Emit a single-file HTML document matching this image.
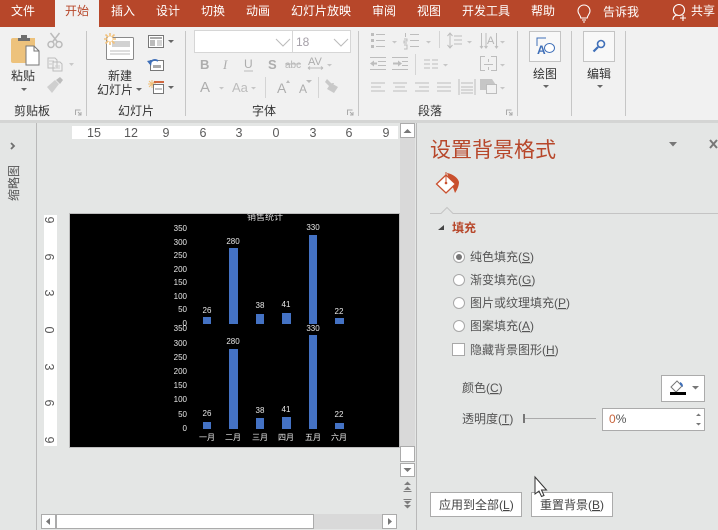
<!DOCTYPE html>
<html lang="zh"><head><meta charset="utf-8"><style>
html,body{margin:0;padding:0;background:#e4e6e5;width:718px;height:530px;overflow:hidden}
svg{display:block;position:absolute;left:0;top:0}
text{font-family:"Liberation Sans","Noto Sans CJK SC",sans-serif;font-size:12px}
.tab text{fill:#fff;text-anchor:middle}
.k text{fill:#333;text-anchor:middle}
.w text{fill:#e8e8e8;font-size:8px;text-anchor:middle}
.ax text{fill:#e8e8e8;font-size:8px;text-anchor:end}
.r text{fill:#5a5a5a;font-size:12.5px;text-anchor:middle}
.p text{fill:#555}
.g{stroke:#bdbdbd;fill:none;stroke-width:1.2}
.a{fill:#b5b5b5}
.d{fill:#666}
</style></head><body>
<svg width="718" height="530" viewBox="0 0 718 530" xmlns="http://www.w3.org/2000/svg">
<rect width="718" height="530" fill="#e4e6e5"/>
<!-- title tabs -->
<rect width="718" height="27" fill="#b7472a"/>
<rect y="27" width="718" height="93" fill="#f1f1f1"/>
<rect x="55" width="44" height="27" fill="#f1f1f1"/>
<rect y="120" width="718" height="3" fill="#d4d5d4"/>
<g class="tab">
<text x="23" y="15">文件</text>
<text x="77" y="15" style="fill:#b7472a">开始</text>
<text x="123" y="15">插入</text>
<text x="168" y="15">设计</text>
<text x="213" y="15">切换</text>
<text x="258" y="15">动画</text>
<text x="321" y="15">幻灯片放映</text>
<text x="384" y="15">审阅</text>
<text x="429" y="15">视图</text>
<text x="486" y="15">开发工具</text>
<text x="543" y="15">帮助</text>
<text x="621" y="16">告诉我</text>
<text x="703" y="15">共享</text>
</g>
<!-- bulb, person -->
<path d="M584 5a6 6 0 0 1 6 6c0 3-2.500 4-2.800 7h-6.400c-.3-3-2.800-4-2.800-7a6 6 0 0 1 6-6zM582 20h4M583 22h2" fill="none" stroke="#fff" stroke-width="1.100"/>
<circle cx="679" cy="10" r="5.500" fill="none" stroke="#fff" stroke-width="1.100"/>
<path d="M673 20c0-4 3-5 5-5M683 15v6M680 18h6" fill="none" stroke="#fff" stroke-width="1.100"/>
<!-- ribbon separators -->
<g fill="#c6c6c6">
<rect x="86" y="31" width="1" height="85"/><rect x="185" y="31" width="1" height="85"/>
<rect x="358" y="31" width="1" height="85"/><rect x="517" y="31" width="1" height="85"/>
<rect x="571" y="31" width="1" height="85"/><rect x="625" y="31" width="1" height="85"/>
</g>
<!-- clipboard -->
<path d="M13 38h22v25H13q-2 0-2-2V40q0-2 2-2z" fill="#edc27c"/>
<path d="M18 41v-3h3v-3h6v3h3v3z" fill="#6e6e6e"/>
<path d="M26 46h8l5 5v14H26z" fill="#fff" stroke="#777"/>
<path d="M34 46v5h5" fill="none" stroke="#777"/>
<!-- scissors -->
<g fill="none" stroke="#bbb" stroke-width="1.500"><circle cx="51" cy="44.500" r="3"/><circle cx="59" cy="44.500" r="3"/><path d="M52.500 42l7-9M57.500 42l-7-9"/></g>
<!-- copy -->
<path d="M48 58h7l2 2v8h-9zM53 62h7l2 2v7h-9z" fill="#f1f1f1" stroke="#bdbdbd"/>
<path d="M49 61h5M49 64h3M55 66h5M55 68h5" stroke="#ccc"/>
<path d="M69 63h5l-2.500 3z" style="fill:#c9c9c9"/>
<!-- brush -->
<path d="M47 87l8-7 4 4-7 9z" fill="#cfcfcf"/><path d="M56 80l4-3 3 3-3 4z" fill="#bdbdbd"/>
<!-- new slide -->
<rect x="106.500" y="37.500" width="27" height="22" rx="1" fill="#fff" stroke="#8a8a8a"/>
<rect x="112" y="41" width="18" height="6" fill="#d2d2d2"/>
<path d="M110 51h20M110 54h20" stroke="#bdbdbd"/>
<path d="M110 33v12M104 39h12M105.500 34.500l9 9M114.500 34.500l-9 9" stroke="#f2c27c" stroke-width="1.600"/>
<circle cx="110" cy="39" r="2.500" fill="#fff"/>
<!-- layout -->
<rect x="148.500" y="35.500" width="15" height="12" fill="#fff" stroke="#777"/>
<rect x="150" y="37" width="12" height="2" fill="#aaa"/><rect x="150" y="40" width="5" height="6" fill="#bbb"/>
<path d="M157 41h5M157 43h5M157 45h5" stroke="#aaa"/>
<!-- reset -->
<rect x="150.500" y="60.500" width="13" height="10" fill="#fff" stroke="#777"/>
<rect x="153" y="65" width="8" height="3" fill="#aaa"/>
<path d="M150 64a5 5 0 0 1 8-3" fill="none" stroke="#3f6fb8" stroke-width="1.800"/><path d="M147 61l5-1-1 6z" fill="#3f6fb8"/>
<!-- section -->
<path d="M152 80v8M148 84h8M149 81l6 6M155 81l-6 6" stroke="#f0bf78"/>
<rect x="154" y="81" width="10" height="2" fill="#d0683f"/>
<rect x="153.500" y="84.500" width="10" height="9" fill="#fff" stroke="#777"/>
<path d="M155 89h7" stroke="#888"/>
<g class="d">
<path d="M168 40h6l-3 3z"/><path d="M168 86h6l-3 3z"/>
<path d="M136 88h6l-3 3z"/><path d="M21 88h6l-3 3z"/>
<path d="M543 85h6l-3 3z"/><path d="M597 85h6l-3 3z"/>
</g>
<g class="k">
<text x="23" y="80">粘贴</text>
<text x="120" y="80">新建</text>
<text x="115" y="94">幻灯片</text>
<text x="32" y="115">剪贴板</text>
<text x="136" y="115">幻灯片</text>
<text x="264" y="115">字体</text>
<text x="430" y="115">段落</text>
<text x="545" y="78">绘图</text>
<text x="599" y="78">编辑</text>
</g>
<!-- dialog launchers -->
<g fill="none" stroke="#aaa"><path d="M75.500 115v-5h5M78 112l3 3M81 112v3h-3"/><path d="M347.500 115v-5h5M350 112l3 3M353 112v3h-3"/><path d="M506.500 115v-5h5M509 112l3 3M512 112v3h-3"/></g>
<!-- font boxes -->
<rect x="194.500" y="30.500" width="98" height="22" fill="#fff" stroke="#d6d6d6"/>
<rect x="292.500" y="30.500" width="58" height="22" fill="#fff" stroke="#d6d6d6"/>
<path d="M276 39l7 7 7-7M334 39l7 7 7-7" fill="none" stroke="#bbb"/>
<text x="296" y="46" style="font-size:12px;fill:#a5a0a8">18</text>
<text x="200" y="69" style="font-weight:bold;font-size:13px;fill:#adadad">B</text>
<text x="223" y="69" style="font-style:italic;font-size:13px;fill:#adadad;font-family:'Liberation Serif',serif">I</text>
<text x="244" y="68" style="font-size:12px;fill:#adadad">U</text>
<text x="268" y="69" style="font-weight:bold;font-size:13px;fill:#adadad">S</text>
<text x="285" y="68" style="font-size:10px;fill:#b5b5b5">abc</text>
<text x="308" y="65" style="font-size:11px;fill:#adadad">AV</text>
<text x="200" y="92" style="font-size:15px;fill:#adadad">A</text>
<text x="232" y="92" style="font-size:13px;fill:#bcbcbc">Aa</text>
<text x="277" y="93" style="font-size:14px;fill:#adadad">A</text>
<text x="299" y="93" style="font-size:12px;fill:#adadad">A</text>
<path d="M244 71h9M285 64h16M308 68h15M308 68l2-1.500M308 68l2 1.500M323 68l-2-1.500M323 68l-2 1.500" stroke="#bbb" fill="none"/>
<path d="M286 83l2-3 2 3zM306 80h6l-3 3z" fill="#bbb"/>
<path d="M329 84l5-1-4 7z" fill="#bbb"/>
<path d="M327 79l4 4-2 3-4-4zM331 83l7 4-4 6-7-4z" fill="#c9c9c9"/>
<rect x="265" y="77" width="1" height="21" fill="#d4d4d4"/><rect x="318" y="77" width="1" height="21" fill="#d4d4d4"/>
<g style="fill:#c6c6c6">
<path d="M327 64h5l-2.500 2.500z"/><path d="M219 87h5l-2.500 2.500z"/><path d="M251 87h5l-2.500 2.500z"/>
<path d="M392 41h5l-2.500 2.500z"/><path d="M426 41h5l-2.500 2.500z"/><path d="M467 41h5l-2.500 2.500z"/><path d="M500 41h5l-2.500 2.500z"/>
<path d="M443 64h5l-2.500 2.500z"/><path d="M500 64h5l-2.500 2.500z"/><path d="M500 87h5l-2.500 2.500z"/>
</g>
<!-- paragraph -->
<g fill="none" stroke="#bdbdbd" stroke-width="1">
<path d="M376 34.500h9M376 40.500h9M376 46.500h9"/>
<path d="M410 34.500h9M410 40.500h9M410 46.500h9"/>
<rect x="371" y="33" width="3" height="3" fill="#bdbdbd" stroke="none"/><rect x="371" y="39" width="3" height="3" fill="#bdbdbd" stroke="none"/><rect x="371" y="45" width="3" height="3" fill="#bdbdbd" stroke="none"/>
<path d="M405.500 33v4M404 39h3v2h-3v2h3M404 45h3v4h-3"/>
<path d="M450 33v15M447.500 36l2.500-3 2.500 3M447.500 45l2.500 3 2.500-3M454 36h8M454 40h8M454 44h8"/>
<path d="M481.500 33v15M486 33v15M496.500 33v15M480 46l1.500 2 1.500-2M484.500 46l1.500 2 1.500-2M495 46l1.500 2 1.500-2"/>
<path d="M370 57.500h16M370 69.500h16M378 61.500h8M378 65.500h8"/>
<path d="M392 57.500h16M392 69.500h16M402 61.500h6M402 65.500h6"/>
<path d="M424 60h6M424 64h6M424 68h6M432 60h6M432 64h6M432 68h6"/>
<path d="M485 56.500h-4.500v14h4.500M491 56.500h5.500v14h-5.500M484 64.500h9M488.500 59v3M488.500 67v3"/>
<path d="M371 83h14M371 87h10M371 91h14M393 83h14M395 87h10M393 91h14M415 83h14M419 87h10M415 91h14M437 83h14M437 87h14M437 91h14"/>
<path d="M459 79v16M475 79v16M461 83h12M461 87h12M461 90h12M461 93h12"/>
</g>
<path d="M370 63.500l4-3v6zM374 62.500h3v2h-3zM402 63.500l-4-3v6zM393 62.500h5v2h-5z" fill="#bdbdbd"/>
<text x="487" y="44" style="font-size:11px;fill:#b5b5b5">A</text>
<path d="M480 79h12l4 6h-10v5h-6z" fill="#c6c6c6"/>
<rect x="486.500" y="84.500" width="10" height="9" fill="#f1f1f1" stroke="#bdbdbd"/>
<rect x="439" y="31" width="1" height="17" fill="#d4d4d4"/><rect x="415" y="54" width="1" height="21" fill="#d4d4d4"/>
<!-- draw / edit buttons -->
<rect x="529.500" y="31.500" width="31" height="30" fill="#f8f8f8" stroke="#c4c4c4"/>
<rect x="583.500" y="31.500" width="31" height="30" fill="#f8f8f8" stroke="#c4c4c4"/>
<path d="M537 46v-8h9" fill="none" stroke="#3f6fb8"/>
<text x="537" y="54" style="font-size:12px;font-weight:bold;fill:#3f6fb8">A</text>
<ellipse cx="549.500" cy="48" rx="5" ry="4.500" fill="#fff" stroke="#3f6fb8"/>
<circle cx="601" cy="44" r="3.500" fill="none" stroke="#3f6fb8" stroke-width="1.600"/>
<path d="M598 47l-4.500 4.500" stroke="#3f6fb8" stroke-width="2.200"/>
<!-- left pane -->
<rect x="36" y="123" width="1" height="407" fill="#b9b9b9"/>
<path d="M11 143l3 3-3 3" fill="none" stroke="#6f6f6f" stroke-width="1.800"/>
<text transform="translate(18,201) rotate(-90)" style="font-size:12px;fill:#555">缩略图</text>
<!-- rulers -->
<rect x="72" y="126" width="326" height="13" fill="#fff"/>
<g class="r">
<text x="94" y="137">15</text><text x="131" y="137">12</text><text x="166" y="137">9</text><text x="203" y="137">6</text><text x="239" y="137">3</text><text x="276" y="137">0</text><text x="313" y="137">3</text><text x="349" y="137">6</text><text x="386" y="137">9</text>
</g>
<rect x="44" y="215" width="13" height="231" fill="#fff"/>
<g class="r">
<text transform="translate(45,220) rotate(90)">9</text>
<text transform="translate(45,257) rotate(90)">6</text>
<text transform="translate(45,293) rotate(90)">3</text>
<text transform="translate(45,330) rotate(90)">0</text>
<text transform="translate(45,367) rotate(90)">3</text>
<text transform="translate(45,403) rotate(90)">6</text>
<text transform="translate(45,440) rotate(90)">9</text>
</g>
<!-- slide -->
<rect x="69.500" y="213.500" width="330" height="234" fill="#000" stroke="#bdbdbd"/>
<text x="265" y="220" text-anchor="middle" style="font-size:9px;fill:#ddd">销售统计</text>
<g class="ax">
<text x="187" y="231">350</text><text x="187" y="245">300</text><text x="187" y="258">250</text><text x="187" y="272">200</text><text x="187" y="285">150</text><text x="187" y="299">100</text><text x="187" y="312">50</text><text x="187" y="326">0</text>
<text x="187" y="331">350</text><text x="187" y="346">300</text><text x="187" y="360">250</text><text x="187" y="374">200</text><text x="187" y="388">150</text><text x="187" y="402">100</text><text x="187" y="417">50</text><text x="187" y="431">0</text>
</g>
<g fill="#4472c4">
<rect x="203" y="317" width="8" height="7"/><rect x="229" y="248" width="9" height="76"/><rect x="256" y="314" width="8" height="10"/><rect x="282" y="313" width="9" height="11"/><rect x="309" y="235" width="8" height="89"/><rect x="335" y="318" width="9" height="6"/>
<rect x="203" y="422" width="8" height="7"/><rect x="229" y="349" width="9" height="80"/><rect x="256" y="418" width="8" height="11"/><rect x="282" y="417" width="9" height="12"/><rect x="309" y="335" width="8" height="94"/><rect x="335" y="423" width="9" height="6"/>
</g>
<g class="w">
<text x="207" y="313">26</text><text x="233" y="244">280</text><text x="260" y="308">38</text><text x="286" y="307">41</text><text x="313" y="230">330</text><text x="339" y="314">22</text>
<text x="207" y="416">26</text><text x="233" y="344">280</text><text x="260" y="413">38</text><text x="286" y="412">41</text><text x="313" y="331">330</text><text x="339" y="417">22</text>
<text x="207" y="440">一月</text><text x="233" y="440">二月</text><text x="260" y="440">三月</text><text x="286" y="440">四月</text><text x="313" y="440">五月</text><text x="339" y="440">六月</text>
</g>
<!-- v scrollbar -->
<rect x="400" y="123" width="15" height="324" fill="#d9d9d9"/>
<rect x="400.500" y="123.500" width="14" height="14" fill="#fff" stroke="#ababab"/>
<path d="M403.500 133l4-4 4 4z" fill="#777"/>
<rect x="400.500" y="446.500" width="14" height="15" fill="#fff" stroke="#ababab"/>
<rect x="400.500" y="463.500" width="14" height="13" fill="#fff" stroke="#ababab"/>
<path d="M403.500 468l4 4 4-4z" fill="#777"/>
<path d="M404 486l3.500-3.500 3.500 3.500zM404 491l3.500-3.500 3.500 3.500zM403.500 492h8v1h-8zM403.500 500h8v1h-8zM404 502h7l-3.500 3.500zM404 506h7l-3.500 3.500z" fill="#7d7d7d" transform="translate(0,-1)"/>
<!-- h scrollbar -->
<rect x="41" y="514" width="356" height="15" fill="#d9d9d9"/>
<rect x="41.500" y="514.500" width="14" height="14" fill="#fff" stroke="#ababab"/>
<path d="M50 518v7l-4-3.500z" fill="#777"/>
<rect x="56.500" y="514.500" width="257" height="14" fill="#fff" stroke="#ababab"/>
<rect x="382.500" y="514.500" width="14" height="14" fill="#fff" stroke="#ababab"/>
<path d="M388 518v7l4-3.500z" fill="#777"/>
<!-- right panel -->
<rect x="416" y="123" width="1" height="407" fill="#b9b9b9"/>
<text x="430" y="157" style="font-size:21px;fill:#b7472a">设置背景格式</text>
<path d="M669 142h8l-4 4.500z" fill="#777"/>
<path d="M710 140l7 8M717 140l-7 8" stroke="#777" stroke-width="2"/>
<path d="M447 173c6 1 11 5 12 9 0 4-2 8-4 11-1-3-2-6-4-9z" fill="#c9502e"/>
<path d="M446 175l-9.500 9 9.500 9 9.500-9z" fill="#fff" stroke="#c9502e" stroke-width="1.300"/>
<path d="M446 172v11" stroke="#c9502e"/><circle cx="446" cy="183" r="1.300" fill="#c9502e"/>
<path d="M430 213.500h11l6-6 6 6h265" fill="none" stroke="#c4c4c4"/>
<path d="M438 230l6-5v5z" fill="#444"/>
<text x="452" y="232" style="font-size:12px;font-weight:bold;fill:#b7472a">填充</text>
<g fill="#fff" stroke="#a8a8a8">
<circle cx="459" cy="257" r="5.500"/><circle cx="459" cy="280" r="5.500"/><circle cx="459" cy="303" r="5.500"/><circle cx="459" cy="326" r="5.500"/>
<rect x="452.500" y="343.500" width="12" height="12"/>
</g>
<circle cx="459" cy="257" r="3" fill="#777"/>
<g class="p">
<text x="470" y="261">纯色填充(<tspan text-decoration="underline">S</tspan>)</text>
<text x="470" y="284">渐变填充(<tspan text-decoration="underline">G</tspan>)</text>
<text x="470" y="307">图片或纹理填充(<tspan text-decoration="underline">P</tspan>)</text>
<text x="470" y="330">图案填充(<tspan text-decoration="underline">A</tspan>)</text>
<text x="470" y="354">隐藏背景图形(<tspan text-decoration="underline">H</tspan>)</text>
<text x="462" y="392">颜色(<tspan text-decoration="underline">C</tspan>)</text>
<text x="462" y="423">透明度(<tspan text-decoration="underline">T</tspan>)</text>
</g>
<!-- color button -->
<rect x="661.500" y="375.500" width="43" height="26" fill="#fff" stroke="#ababab"/>
<path d="M677 381l-6 6 5 5 6-6z" fill="#fff" stroke="#777"/>
<path d="M680 382c2 1 3 2 3 5l-3-2z" fill="#3f6fb8"/>
<rect x="670" y="392" width="16" height="3" fill="#000"/>
<path d="M692 386h7l-3.500 3.500z" fill="#777"/>
<!-- slider -->
<rect x="523" y="414" width="2" height="9" fill="#777"/>
<rect x="525" y="418" width="71" height="1" fill="#ababab"/>
<rect x="602.500" y="408.500" width="102" height="22" fill="#fff" stroke="#ababab"/>
<text x="609" y="423" style="font-size:12px;fill:#555"><tspan fill="#c8643c">0</tspan>%</text>
<path d="M696 416l2.500-2.500 2.500 2.500zM696 423l2.500 2.500 2.500-2.500z" fill="#777"/>
<!-- buttons -->
<rect x="430.500" y="492.500" width="91" height="24" fill="#fff" stroke="#ababab"/>
<rect x="531.500" y="492.500" width="81" height="24" fill="#fff" stroke="#ababab"/>
<text x="439" y="509" style="fill:#444">应用到全部(<tspan text-decoration="underline">L</tspan>)</text>
<text x="540" y="509" style="fill:#444">重置背景(<tspan text-decoration="underline">B</tspan>)</text>
<!-- cursor -->
<path d="M535 477v17l4-3 2.500 5.500 2.500-1-2.500-5.500h5z" fill="#fff" stroke="#333"/>
</svg>
</body></html>
